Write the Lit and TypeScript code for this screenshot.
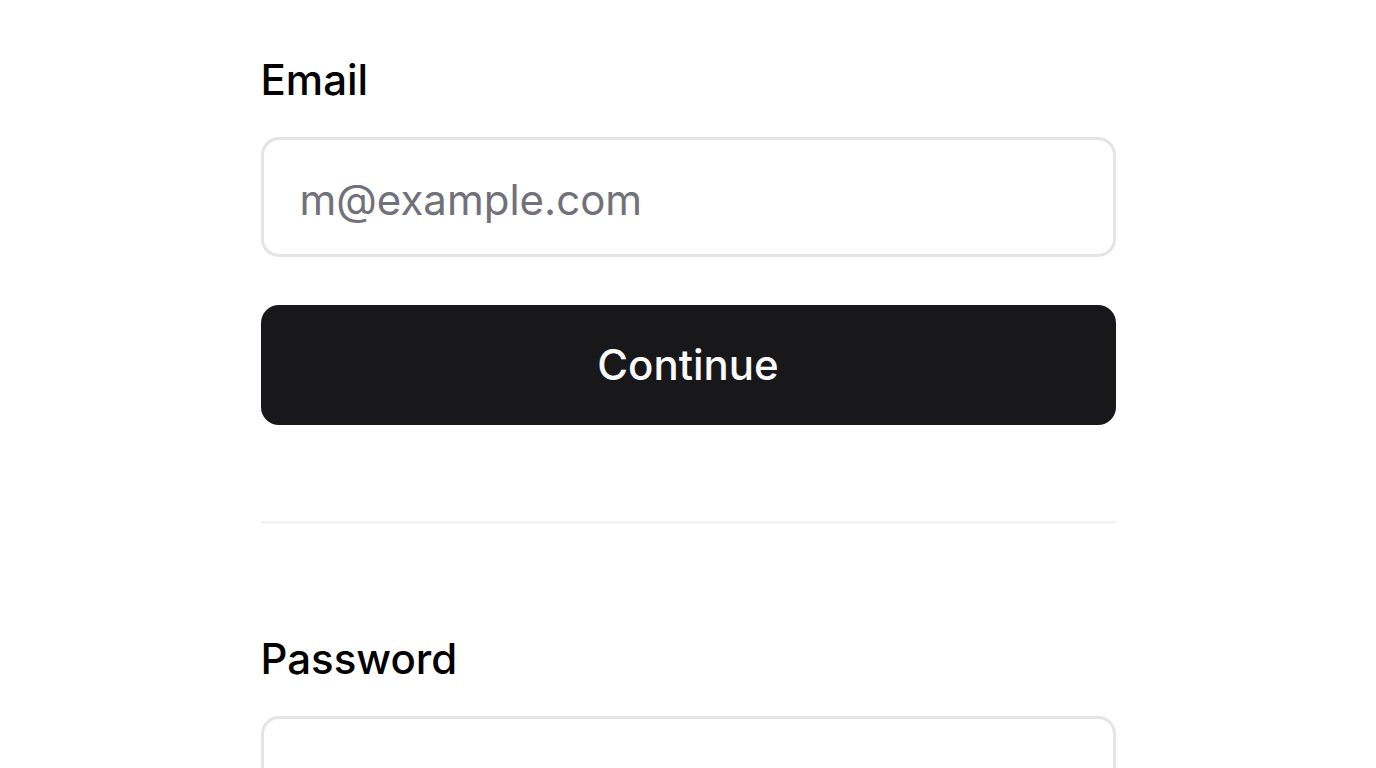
import { LitElement, html, css } from "lit";
import { customElement } from "lit/decorators.js";

@customElement("app-root")
export class AppRoot extends LitElement {
  static styles = css`
    :host {
      display: block;
      height: 100vh;
      overflow: hidden;
      background: #fff;
      color: #000;
      font-family: Inter, sans-serif;
      font-size: 42px;
      line-height: 60px;
    }
    * {
      box-sizing: border-box;
    }
    form {
      display: grid;
      max-width: 855px;
      margin: 0 auto;
      padding: 50px 0 96px;
    }
    label {
      font-weight: 500;
      margin-bottom: 27px;
    }
    input {
      width: 100%;
      height: 120px;
      padding: 4px 36px 0;
      border: 3px solid #e4e4e4;
      border-radius: 18px;
      background: #fff;
      color: inherit;
      font: inherit;
    }
    input::placeholder {
      color: #717179;
      opacity: 1;
    }
    button {
      height: 120px;
      padding: 0 48px;
      border: 0;
      border-radius: 18px;
      background: #18181a;
      color: #fafafa;
      font: inherit;
      font-weight: 500;
    }
    .primary {
      margin-top: 48px;
    }
    hr {
      width: 100%;
      height: 3px;
      margin: 96px 0 105px;
      border: 0;
      background: #f4f4f5;
    }
  `;

  render() {
    return html`
      <form @submit=${(e: Event) => e.preventDefault()}>
        <label for="email">Email</label>
        <input id="email" type="email" placeholder="m@example.com" />
        <button class="primary" type="submit">Continue</button>
        <hr />
        <label for="password">Password</label>
        <input id="password" type="password" />
      </form>
    `;
  }
}
